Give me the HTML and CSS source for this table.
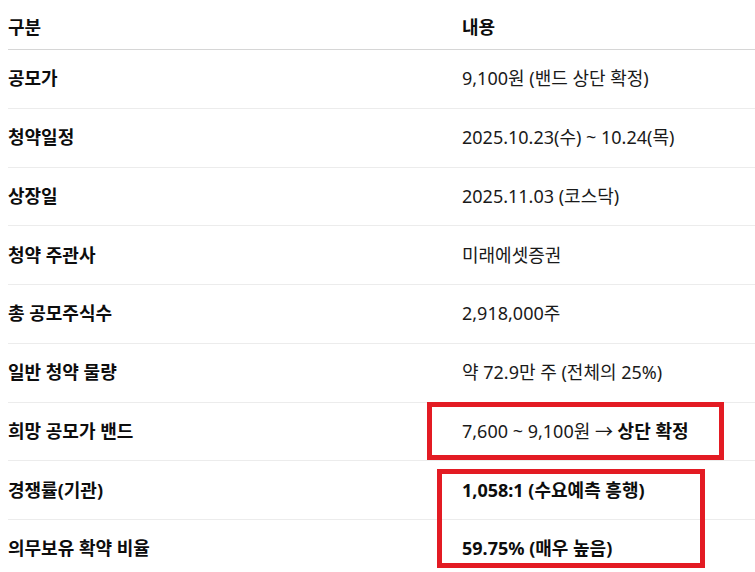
FILE: index.html
```html
<!DOCTYPE html>
<html lang="ko">
<head>
<meta charset="utf-8">
<link rel="stylesheet" href="styles.css">
</head>
<body>
<div class="page">
  <div class="table">
    <div class="row head">
      <div class="key">구분</div>
      <div class="val">내용</div>
    </div>
    <div class="row">
      <div class="key">공모가</div>
      <div class="val">9,100원 (밴드 상단 확정)</div>
    </div>
    <div class="row">
      <div class="key">청약일정</div>
      <div class="val">2025.10.23(수) ~ 10.24(목)</div>
    </div>
    <div class="row">
      <div class="key">상장일</div>
      <div class="val">2025.11.03 (코스닥)</div>
    </div>
    <div class="row">
      <div class="key">청약 주관사</div>
      <div class="val">미래에셋증권</div>
    </div>
    <div class="row">
      <div class="key">총 공모주식수</div>
      <div class="val">2,918,000주</div>
    </div>
    <div class="row">
      <div class="key">일반 청약 물량</div>
      <div class="val">약 72.9만 주 (전체의 25%)</div>
    </div>
    <div class="row">
      <div class="key">희망 공모가 밴드</div>
      <div class="val">7,600 ~ 9,100원 → <b>상단 확정</b></div>
    </div>
    <div class="row">
      <div class="key">경쟁률(기관)</div>
      <div class="val"><b>1,058:1 (수요예측 흥행)</b></div>
    </div>
    <div class="row">
      <div class="key">의무보유 확약 비율</div>
      <div class="val"><b>59.75% (매우 높음)</b></div>
    </div>
  </div>
  <div class="mark mark-band"></div>
  <div class="mark mark-demand"></div>
</div>
</body>
</html>
```

FILE: styles.css
```css
html, body {
  margin: 0;
  padding: 0;
  background: #ffffff;
  overflow: hidden;
}
.page {
  position: relative;
  width: 755px;
  height: 572px;
  overflow: hidden;
  font-family: "Noto Sans", "Noto Sans CJK KR", sans-serif;
  font-size: 18px;
  color: #0d0d0d;
}
.table {
  margin-left: 8px;
  display: flex;
  flex-direction: column;
}
.row {
  display: flex;
  align-items: center;
  height: 58.75px;
  box-sizing: border-box;
  border-bottom: 1px solid #ececec;
}
.row.head {
  height: 50px;
  align-items: flex-start;
  padding-top: 14px;
  border-bottom-color: #d6d6d6;
}
.key {
  width: 454px;
  padding-left: 0;
  font-weight: 700;
  line-height: 27px;
}
.val {
  line-height: 27px;
  color: #1a1a1a;
}
.head .val {
  font-weight: 700;
  color: #0d0d0d;
}
.val b {
  font-weight: 700;
  color: #0d0d0d;
}
.mark {
  position: absolute;
  border: 5px solid #e31b23;
  box-sizing: border-box;
}
.mark-band {
  left: 427px;
  top: 402px;
  width: 297px;
  height: 58px;
}
.mark-demand {
  left: 437px;
  top: 469px;
  width: 268px;
  height: 99px;
}
```
